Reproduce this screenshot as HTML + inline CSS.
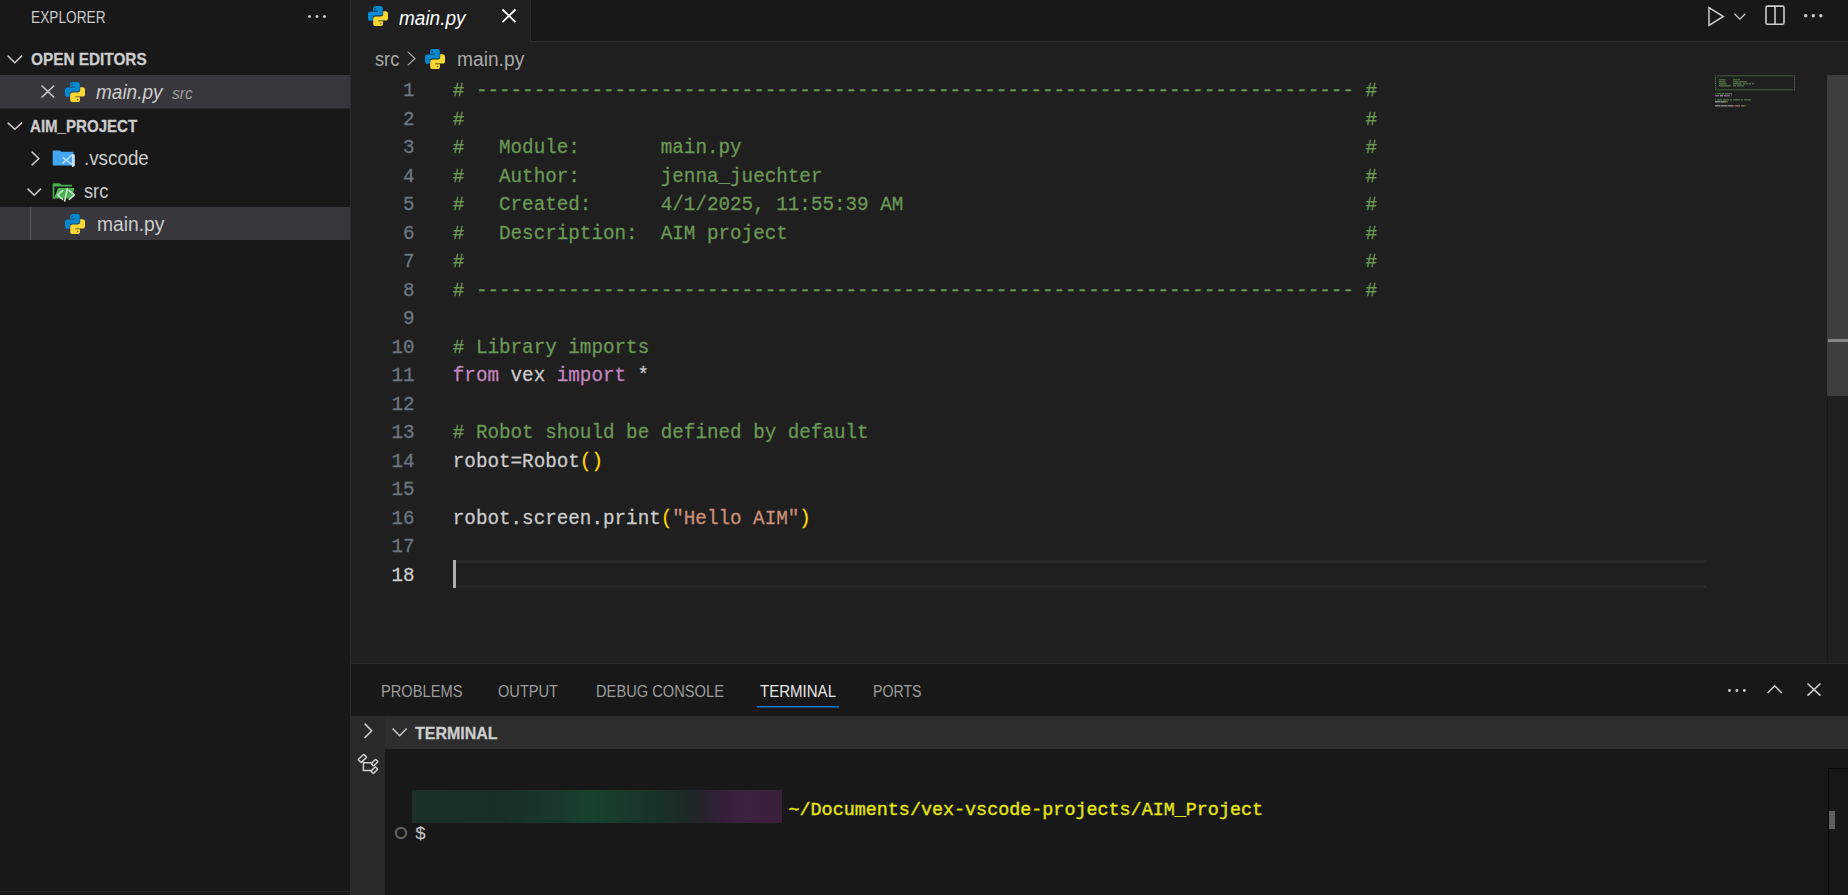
<!DOCTYPE html>
<html><head><meta charset="utf-8">
<style>
*{box-sizing:border-box;margin:0;padding:0}
html,body{width:1848px;height:895px;overflow:hidden;background:#181818}
body{position:relative;font-family:"Liberation Sans",sans-serif;color:#cccccc}
.a{position:absolute}
.t{position:absolute;white-space:pre;line-height:1;transform-origin:0 0}
svg{position:absolute;overflow:visible}
</style></head><body>
<div class="a" style="left:0px;top:0px;width:350px;height:895px;background:#181818;"></div>
<div class="a" style="left:350px;top:0px;width:1px;height:716px;background:#2b2b2b;"></div>
<div class="a" style="left:0px;top:891px;width:350px;height:1px;background:#2b2b2b;"></div>
<div class="a" style="left:351px;top:0px;width:1497px;height:42px;background:#181818;"></div>
<div class="a" style="left:531px;top:41px;width:1317px;height:1px;background:#2b2b2b;"></div>
<div class="a" style="left:351px;top:0px;width:179px;height:42px;background:#1f1f1f;"></div>
<div class="a" style="left:530px;top:0px;width:1px;height:42px;background:#2b2b2b;"></div>
<div class="a" style="left:351px;top:42px;width:1497px;height:621px;background:#1f1f1f;"></div>
<div class="a" style="left:351px;top:663px;width:1497px;height:1px;background:#2b2b2b;"></div>
<div class="a" style="left:351px;top:664px;width:1497px;height:231px;background:#181818;"></div>
<div class="a" style="left:350px;top:716px;width:35px;height:179px;background:#2a2a2a;"></div>
<div class="a" style="left:385px;top:716px;width:1463px;height:33px;background:#2d2d2d;"></div>
<div class="t" style="left:30.50px;top:9.23px;font-family:'Liberation Sans',sans-serif;font-size:16.5px;color:#cccccc;font-weight:normal;font-style:normal;transform:scale(0.83,1.0);">EXPLORER</div>
<svg style="left:308.0px;top:14.5px" width="17.939999999999998" height="3.0" viewBox="0 0 17.939999999999998 3.0"><circle cx="1.5" cy="1.5" r="1.5" fill="#cccccc"/><circle cx="8.969999999999999" cy="1.5" r="1.5" fill="#cccccc"/><circle cx="16.439999999999998" cy="1.5" r="1.5" fill="#cccccc"/></svg>
<svg style="left:7px;top:55.3px" width="15.7" height="8.6" viewBox="0 0 15.7 8.6"><path d="M0.6,0.6 L7.85,7.8 L15.1,0.6" fill="none" stroke="#cccccc" stroke-width="1.5"/></svg>
<div class="t" style="left:30.50px;top:51.03px;font-family:'Liberation Sans',sans-serif;font-size:16.5px;color:#cccccc;font-weight:bold;font-style:normal;transform:scale(0.93,1.0);-webkit-text-stroke:0.3px #cccccc;">OPEN EDITORS</div>
<div class="a" style="left:0px;top:75px;width:350px;height:33px;background:#37373d;"></div>
<div class="a" style="left:0px;top:108px;width:350px;height:1px;background:#262629;"></div>
<svg style="left:41.2px;top:85.4px" width="13.7" height="13" viewBox="0 0 13.7 13"><path d="M0.5,0.5 L13.2,12.5 M13.2,0.5 L0.5,12.5" fill="none" stroke="#cccccc" stroke-width="1.6"/></svg>
<svg style="left:65px;top:82px" width="20" height="20" viewBox="0 0 20 20">
<path fill="#0288d1" d="M5,2.6 Q5,0 7.6,0 H12.4 Q14.8,0 14.8,2.6 V7.2 Q14.8,9.6 12.4,9.6 H7.6 Q4.8,9.6 4.8,12.2 V14.8 H2.5 Q0,14.8 0,12.2 V8 Q0,5.4 2.5,5.4 H9.8 V4.8 H5 Z"/>
<circle cx="7.3" cy="2.5" r="0.85" fill="#000" fill-opacity="0.5"/>
<path fill="#fdd835" d="M15,17.4 Q15,20 12.4,20 H7.6 Q5.2,20 5.2,17.4 V12.8 Q5.2,10.4 7.6,10.4 H12.4 Q15.2,10.4 15.2,7.8 V5.2 H17.5 Q20,5.2 20,7.8 V12 Q20,14.6 17.5,14.6 H10.2 V15.2 H15 Z"/>
<circle cx="12.7" cy="17.5" r="0.85" fill="#000" fill-opacity="0.5"/>
</svg>
<div class="t" style="left:96.20px;top:82.07px;font-family:'Liberation Sans',sans-serif;font-size:20px;color:#cccccc;font-weight:normal;font-style:italic;transform:scale(0.95,1.0);">main.py</div>
<div class="t" style="left:172.20px;top:84.61px;font-family:'Liberation Sans',sans-serif;font-size:17px;color:#9d9d9d;font-weight:normal;font-style:italic;transform:scale(0.92,1.0);">src</div>
<svg style="left:7px;top:121.7px" width="15.7" height="8" viewBox="0 0 15.7 8"><path d="M0.6,0.6 L7.85,7.2 L15.1,0.6" fill="none" stroke="#cccccc" stroke-width="1.5"/></svg>
<div class="t" style="left:30.20px;top:118.03px;font-family:'Liberation Sans',sans-serif;font-size:16.5px;color:#cccccc;font-weight:bold;font-style:normal;transform:scale(0.913,1.0);-webkit-text-stroke:0.3px #cccccc;">AIM_PROJECT</div>
<svg style="left:31.3px;top:150.6px" width="8.6" height="15" viewBox="0 0 8.6 15"><path d="M0.6,0.6 L7.8,7.5 L0.6,14.4" fill="none" stroke="#cccccc" stroke-width="1.5"/></svg>
<svg style="left:52px;top:150px" width="24" height="18" viewBox="0 0 24 18">
<path fill="#42a5f5" d="M0.7,1.4 Q0.7,0.4 1.7,0.4 H8 L9.5,1.7 H20.5 Q21.5,1.7 21.5,2.7 V14.5 Q21.5,15.5 20.5,15.5 H1.7 Q0.7,15.5 0.7,14.5 Z"/>
<path fill="none" stroke="#1f3a52" stroke-opacity="0.5" stroke-width="1" d="M20.2,3.2 L23.2,4.6"/>
<path fill="none" stroke="#c5e1fb" stroke-width="1.4" d="M10.5,7.3 L20.6,14.9 M10.5,13.4 L20.6,4.5"/>
<path fill="#c5e1fb" d="M20,3.6 L22.8,4.8 V16 L20,17.2 Z"/>
</svg>
<div class="t" style="left:84.40px;top:148.07px;font-family:'Liberation Sans',sans-serif;font-size:20px;color:#cccccc;font-weight:normal;font-style:normal;transform:scale(0.94,1.0);">.vscode</div>
<svg style="left:27.4px;top:187.7px" width="14.5" height="8" viewBox="0 0 14.5 8"><path d="M0.6,0.6 L7.25,7.2 L13.9,0.6" fill="none" stroke="#cccccc" stroke-width="1.5"/></svg>
<svg style="left:52px;top:182px" width="24" height="21" viewBox="0 0 24 21">
<path fill="#4caf50" d="M0.7,2.4 Q0.7,1.2 1.9,1.2 H7.6 L9.4,2.8 H19.4 Q20,2.8 20,3.6 V4.4 H2.3 V16.5 H0.7 Z"/>
<path fill="#4caf50" d="M6,6 H21.3 Q22.4,6 22.1,7.1 L19.6,16.5 H0.9 L2.4,15.6 Z"/>
<path fill="none" stroke="#c8e6c9" stroke-width="1.6" stroke-linecap="round" d="M10.6,8.6 L5.6,12.8 L10.6,17.4 M17.3,8.6 L22.3,12.9 L17.3,17.4 M15.3,6.5 L12.7,19"/>
</svg>
<div class="t" style="left:84.40px;top:181.07px;font-family:'Liberation Sans',sans-serif;font-size:20px;color:#cccccc;font-weight:normal;font-style:normal;transform:scale(0.91,1.0);">src</div>
<div class="a" style="left:0px;top:207px;width:350px;height:33px;background:#37373d;"></div>
<div class="a" style="left:30px;top:207px;width:1px;height:33px;background:#585858;"></div>
<svg style="left:65px;top:214px" width="20" height="20" viewBox="0 0 20 20">
<path fill="#0288d1" d="M5,2.6 Q5,0 7.6,0 H12.4 Q14.8,0 14.8,2.6 V7.2 Q14.8,9.6 12.4,9.6 H7.6 Q4.8,9.6 4.8,12.2 V14.8 H2.5 Q0,14.8 0,12.2 V8 Q0,5.4 2.5,5.4 H9.8 V4.8 H5 Z"/>
<circle cx="7.3" cy="2.5" r="0.85" fill="#000" fill-opacity="0.5"/>
<path fill="#fdd835" d="M15,17.4 Q15,20 12.4,20 H7.6 Q5.2,20 5.2,17.4 V12.8 Q5.2,10.4 7.6,10.4 H12.4 Q15.2,10.4 15.2,7.8 V5.2 H17.5 Q20,5.2 20,7.8 V12 Q20,14.6 17.5,14.6 H10.2 V15.2 H15 Z"/>
<circle cx="12.7" cy="17.5" r="0.85" fill="#000" fill-opacity="0.5"/>
</svg>
<div class="t" style="left:96.60px;top:214.07px;font-family:'Liberation Sans',sans-serif;font-size:20px;color:#cccccc;font-weight:normal;font-style:normal;transform:scale(0.963,1.0);">main.py</div>
<svg style="left:368px;top:6px" width="20" height="20" viewBox="0 0 20 20">
<path fill="#0288d1" d="M5,2.6 Q5,0 7.6,0 H12.4 Q14.8,0 14.8,2.6 V7.2 Q14.8,9.6 12.4,9.6 H7.6 Q4.8,9.6 4.8,12.2 V14.8 H2.5 Q0,14.8 0,12.2 V8 Q0,5.4 2.5,5.4 H9.8 V4.8 H5 Z"/>
<circle cx="7.3" cy="2.5" r="0.85" fill="#000" fill-opacity="0.5"/>
<path fill="#fdd835" d="M15,17.4 Q15,20 12.4,20 H7.6 Q5.2,20 5.2,17.4 V12.8 Q5.2,10.4 7.6,10.4 H12.4 Q15.2,10.4 15.2,7.8 V5.2 H17.5 Q20,5.2 20,7.8 V12 Q20,14.6 17.5,14.6 H10.2 V15.2 H15 Z"/>
<circle cx="12.7" cy="17.5" r="0.85" fill="#000" fill-opacity="0.5"/>
</svg>
<div class="t" style="left:399.00px;top:7.57px;font-family:'Liberation Sans',sans-serif;font-size:20px;color:#ffffff;font-weight:normal;font-style:italic;transform:scale(0.95,1.0);">main.py</div>
<svg style="left:502px;top:9.2px" width="14" height="13.6" viewBox="0 0 14 13.6"><path d="M0.5,0.5 L13.5,13.1 M13.5,0.5 L0.5,13.1" fill="none" stroke="#ffffff" stroke-width="1.8"/></svg>
<div class="t" style="left:375.20px;top:49.07px;font-family:'Liberation Sans',sans-serif;font-size:20px;color:#a9a9a9;font-weight:normal;font-style:normal;transform:scale(0.91,1.0);">src</div>
<svg style="left:407.3px;top:51px" width="8.7" height="15" viewBox="0 0 8.7 15"><path d="M0.6,0.6 L7.8999999999999995,7.5 L0.6,14.4" fill="none" stroke="#a9a9a9" stroke-width="1.3"/></svg>
<svg style="left:425px;top:49px" width="20" height="20" viewBox="0 0 20 20">
<path fill="#0288d1" d="M5,2.6 Q5,0 7.6,0 H12.4 Q14.8,0 14.8,2.6 V7.2 Q14.8,9.6 12.4,9.6 H7.6 Q4.8,9.6 4.8,12.2 V14.8 H2.5 Q0,14.8 0,12.2 V8 Q0,5.4 2.5,5.4 H9.8 V4.8 H5 Z"/>
<circle cx="7.3" cy="2.5" r="0.85" fill="#000" fill-opacity="0.5"/>
<path fill="#fdd835" d="M15,17.4 Q15,20 12.4,20 H7.6 Q5.2,20 5.2,17.4 V12.8 Q5.2,10.4 7.6,10.4 H12.4 Q15.2,10.4 15.2,7.8 V5.2 H17.5 Q20,5.2 20,7.8 V12 Q20,14.6 17.5,14.6 H10.2 V15.2 H15 Z"/>
<circle cx="12.7" cy="17.5" r="0.85" fill="#000" fill-opacity="0.5"/>
</svg>
<div class="t" style="left:456.60px;top:49.07px;font-family:'Liberation Sans',sans-serif;font-size:20px;color:#a9a9a9;font-weight:normal;font-style:normal;transform:scale(0.96,1.0);">main.py</div>
<svg style="left:1700px;top:0px" width="148" height="42" viewBox="0 0 148 42"><path d="M9,7.6 V25.4 L23.3,16.5 Z" fill="none" stroke="#cccccc" stroke-width="1.5" stroke-linejoin="miter"/><path d="M34.5,13.8 L39.9,19.2 L45.3,13.8" fill="none" stroke="#cccccc" stroke-width="1.3"/><rect x="66" y="6.1" width="18" height="18.2" rx="1.6" fill="none" stroke="#cccccc" stroke-width="1.6"/><path d="M75,6 V24.5" stroke="#cccccc" stroke-width="1.6"/></svg>
<svg style="left:1804.3px;top:14.3px" width="18.599999999999998" height="3.4" viewBox="0 0 18.599999999999998 3.4"><circle cx="1.7" cy="1.7" r="1.7" fill="#cccccc"/><circle cx="9.299999999999999" cy="1.7" r="1.7" fill="#cccccc"/><circle cx="16.9" cy="1.7" r="1.7" fill="#cccccc"/></svg>
<div class="t" style="left:452.80px;top:82.26px;font-family:'Liberation Mono',monospace;font-size:19.250000000000004px;color:#6a9955;font-weight:normal;font-style:normal;transform:scale(1.0,1.02);-webkit-text-stroke:0.25px #6a9955;"># ---------------------------------------------------------------------------- #</div>
<div class="t" style="left:452.80px;top:110.76px;font-family:'Liberation Mono',monospace;font-size:19.250000000000004px;color:#6a9955;font-weight:normal;font-style:normal;transform:scale(1.0,1.02);-webkit-text-stroke:0.25px #6a9955;">#                                                                              #</div>
<div class="t" style="left:452.80px;top:139.26px;font-family:'Liberation Mono',monospace;font-size:19.250000000000004px;color:#6a9955;font-weight:normal;font-style:normal;transform:scale(1.0,1.02);-webkit-text-stroke:0.25px #6a9955;">#   Module:       main.py                                                      #</div>
<div class="t" style="left:452.80px;top:167.76px;font-family:'Liberation Mono',monospace;font-size:19.250000000000004px;color:#6a9955;font-weight:normal;font-style:normal;transform:scale(1.0,1.02);-webkit-text-stroke:0.25px #6a9955;">#   Author:       jenna_juechter                                               #</div>
<div class="t" style="left:452.80px;top:196.26px;font-family:'Liberation Mono',monospace;font-size:19.250000000000004px;color:#6a9955;font-weight:normal;font-style:normal;transform:scale(1.0,1.02);-webkit-text-stroke:0.25px #6a9955;">#   Created:      4/1/2025, 11:55:39 AM                                        #</div>
<div class="t" style="left:452.80px;top:224.76px;font-family:'Liberation Mono',monospace;font-size:19.250000000000004px;color:#6a9955;font-weight:normal;font-style:normal;transform:scale(1.0,1.02);-webkit-text-stroke:0.25px #6a9955;">#   Description:  AIM project                                                  #</div>
<div class="t" style="left:452.80px;top:253.26px;font-family:'Liberation Mono',monospace;font-size:19.250000000000004px;color:#6a9955;font-weight:normal;font-style:normal;transform:scale(1.0,1.02);-webkit-text-stroke:0.25px #6a9955;">#                                                                              #</div>
<div class="t" style="left:452.80px;top:281.76px;font-family:'Liberation Mono',monospace;font-size:19.250000000000004px;color:#6a9955;font-weight:normal;font-style:normal;transform:scale(1.0,1.02);-webkit-text-stroke:0.25px #6a9955;"># ---------------------------------------------------------------------------- #</div>
<div class="t" style="left:452.80px;top:338.76px;font-family:'Liberation Mono',monospace;font-size:19.250000000000004px;color:#6a9955;font-weight:normal;font-style:normal;transform:scale(1.0,1.02);-webkit-text-stroke:0.25px #6a9955;"># Library imports</div>
<div class="t" style="left:452.80px;top:367.26px;font-family:'Liberation Mono',monospace;font-size:19.250000000000004px;color:#c586c0;font-weight:normal;font-style:normal;transform:scale(1.0,1.02);-webkit-text-stroke:0.25px #c586c0;">from</div>
<div class="t" style="left:510.55px;top:367.26px;font-family:'Liberation Mono',monospace;font-size:19.250000000000004px;color:#cccccc;font-weight:normal;font-style:normal;transform:scale(1.0,1.02);-webkit-text-stroke:0.25px #cccccc;">vex</div>
<div class="t" style="left:556.75px;top:367.26px;font-family:'Liberation Mono',monospace;font-size:19.250000000000004px;color:#c586c0;font-weight:normal;font-style:normal;transform:scale(1.0,1.02);-webkit-text-stroke:0.25px #c586c0;">import</div>
<div class="t" style="left:637.60px;top:367.26px;font-family:'Liberation Mono',monospace;font-size:19.250000000000004px;color:#cccccc;font-weight:normal;font-style:normal;transform:scale(1.0,1.02);-webkit-text-stroke:0.25px #cccccc;">*</div>
<div class="t" style="left:452.80px;top:424.26px;font-family:'Liberation Mono',monospace;font-size:19.250000000000004px;color:#6a9955;font-weight:normal;font-style:normal;transform:scale(1.0,1.02);-webkit-text-stroke:0.25px #6a9955;"># Robot should be defined by default</div>
<div class="t" style="left:452.80px;top:452.76px;font-family:'Liberation Mono',monospace;font-size:19.250000000000004px;color:#cccccc;font-weight:normal;font-style:normal;transform:scale(1.0,1.02);-webkit-text-stroke:0.25px #cccccc;">robot=Robot</div>
<div class="t" style="left:579.85px;top:452.76px;font-family:'Liberation Mono',monospace;font-size:19.250000000000004px;color:#ffd700;font-weight:normal;font-style:normal;transform:scale(1.0,1.02);-webkit-text-stroke:0.25px #ffd700;">()</div>
<div class="t" style="left:452.80px;top:509.76px;font-family:'Liberation Mono',monospace;font-size:19.250000000000004px;color:#cccccc;font-weight:normal;font-style:normal;transform:scale(1.0,1.02);-webkit-text-stroke:0.25px #cccccc;">robot.screen.print</div>
<div class="t" style="left:660.70px;top:509.76px;font-family:'Liberation Mono',monospace;font-size:19.250000000000004px;color:#ffd700;font-weight:normal;font-style:normal;transform:scale(1.0,1.02);-webkit-text-stroke:0.25px #ffd700;">(</div>
<div class="t" style="left:672.25px;top:509.76px;font-family:'Liberation Mono',monospace;font-size:19.250000000000004px;color:#ce9178;font-weight:normal;font-style:normal;transform:scale(1.0,1.02);-webkit-text-stroke:0.25px #ce9178;">&quot;Hello AIM&quot;</div>
<div class="t" style="left:799.30px;top:509.76px;font-family:'Liberation Mono',monospace;font-size:19.250000000000004px;color:#ffd700;font-weight:normal;font-style:normal;transform:scale(1.0,1.02);-webkit-text-stroke:0.25px #ffd700;">)</div>
<div class="t" style="left:403.05px;top:82.26px;font-family:'Liberation Mono',monospace;font-size:19.250000000000004px;color:#6e7681;font-weight:normal;font-style:normal;transform:scale(1.0,1.02);-webkit-text-stroke:0.25px #6e7681;">1</div>
<div class="t" style="left:403.05px;top:110.76px;font-family:'Liberation Mono',monospace;font-size:19.250000000000004px;color:#6e7681;font-weight:normal;font-style:normal;transform:scale(1.0,1.02);-webkit-text-stroke:0.25px #6e7681;">2</div>
<div class="t" style="left:403.05px;top:139.26px;font-family:'Liberation Mono',monospace;font-size:19.250000000000004px;color:#6e7681;font-weight:normal;font-style:normal;transform:scale(1.0,1.02);-webkit-text-stroke:0.25px #6e7681;">3</div>
<div class="t" style="left:403.05px;top:167.76px;font-family:'Liberation Mono',monospace;font-size:19.250000000000004px;color:#6e7681;font-weight:normal;font-style:normal;transform:scale(1.0,1.02);-webkit-text-stroke:0.25px #6e7681;">4</div>
<div class="t" style="left:403.05px;top:196.26px;font-family:'Liberation Mono',monospace;font-size:19.250000000000004px;color:#6e7681;font-weight:normal;font-style:normal;transform:scale(1.0,1.02);-webkit-text-stroke:0.25px #6e7681;">5</div>
<div class="t" style="left:403.05px;top:224.76px;font-family:'Liberation Mono',monospace;font-size:19.250000000000004px;color:#6e7681;font-weight:normal;font-style:normal;transform:scale(1.0,1.02);-webkit-text-stroke:0.25px #6e7681;">6</div>
<div class="t" style="left:403.05px;top:253.26px;font-family:'Liberation Mono',monospace;font-size:19.250000000000004px;color:#6e7681;font-weight:normal;font-style:normal;transform:scale(1.0,1.02);-webkit-text-stroke:0.25px #6e7681;">7</div>
<div class="t" style="left:403.05px;top:281.76px;font-family:'Liberation Mono',monospace;font-size:19.250000000000004px;color:#6e7681;font-weight:normal;font-style:normal;transform:scale(1.0,1.02);-webkit-text-stroke:0.25px #6e7681;">8</div>
<div class="t" style="left:403.05px;top:310.26px;font-family:'Liberation Mono',monospace;font-size:19.250000000000004px;color:#6e7681;font-weight:normal;font-style:normal;transform:scale(1.0,1.02);-webkit-text-stroke:0.25px #6e7681;">9</div>
<div class="t" style="left:391.50px;top:338.76px;font-family:'Liberation Mono',monospace;font-size:19.250000000000004px;color:#6e7681;font-weight:normal;font-style:normal;transform:scale(1.0,1.02);-webkit-text-stroke:0.25px #6e7681;">10</div>
<div class="t" style="left:391.50px;top:367.26px;font-family:'Liberation Mono',monospace;font-size:19.250000000000004px;color:#6e7681;font-weight:normal;font-style:normal;transform:scale(1.0,1.02);-webkit-text-stroke:0.25px #6e7681;">11</div>
<div class="t" style="left:391.50px;top:395.76px;font-family:'Liberation Mono',monospace;font-size:19.250000000000004px;color:#6e7681;font-weight:normal;font-style:normal;transform:scale(1.0,1.02);-webkit-text-stroke:0.25px #6e7681;">12</div>
<div class="t" style="left:391.50px;top:424.26px;font-family:'Liberation Mono',monospace;font-size:19.250000000000004px;color:#6e7681;font-weight:normal;font-style:normal;transform:scale(1.0,1.02);-webkit-text-stroke:0.25px #6e7681;">13</div>
<div class="t" style="left:391.50px;top:452.76px;font-family:'Liberation Mono',monospace;font-size:19.250000000000004px;color:#6e7681;font-weight:normal;font-style:normal;transform:scale(1.0,1.02);-webkit-text-stroke:0.25px #6e7681;">14</div>
<div class="t" style="left:391.50px;top:481.26px;font-family:'Liberation Mono',monospace;font-size:19.250000000000004px;color:#6e7681;font-weight:normal;font-style:normal;transform:scale(1.0,1.02);-webkit-text-stroke:0.25px #6e7681;">15</div>
<div class="t" style="left:391.50px;top:509.76px;font-family:'Liberation Mono',monospace;font-size:19.250000000000004px;color:#6e7681;font-weight:normal;font-style:normal;transform:scale(1.0,1.02);-webkit-text-stroke:0.25px #6e7681;">16</div>
<div class="t" style="left:391.50px;top:538.26px;font-family:'Liberation Mono',monospace;font-size:19.250000000000004px;color:#6e7681;font-weight:normal;font-style:normal;transform:scale(1.0,1.02);-webkit-text-stroke:0.25px #6e7681;">17</div>
<div class="t" style="left:391.50px;top:566.76px;font-family:'Liberation Mono',monospace;font-size:19.250000000000004px;color:#cccccc;font-weight:normal;font-style:normal;transform:scale(1.0,1.02);-webkit-text-stroke:0.25px #cccccc;">18</div>
<div class="a" style="left:456px;top:560px;width:1250px;height:3px;background:#282828;"></div>
<div class="a" style="left:456px;top:585px;width:1250px;height:3px;background:#282828;"></div>
<div class="a" style="left:453px;top:560px;width:3px;height:28px;background:#aeafad;"></div>
<svg style="left:1715px;top:0px;opacity:0.75" width="100" height="120" viewBox="0 0 100 120"><rect x="0" y="75" width="1" height="1.5" fill="#6a9955" fill-opacity="0.8"/><rect x="2" y="75" width="76" height="1.5" fill="#6a9955" fill-opacity="0.45"/><rect x="79" y="75" width="1" height="1.5" fill="#6a9955" fill-opacity="0.8"/><rect x="0" y="77" width="1" height="1.5" fill="#6a9955" fill-opacity="0.8"/><rect x="79" y="77" width="1" height="1.5" fill="#6a9955" fill-opacity="0.8"/><rect x="0" y="79" width="1" height="1.5" fill="#6a9955" fill-opacity="0.8"/><rect x="4" y="79" width="6" height="1.5" fill="#6a9955" fill-opacity="0.8"/><rect x="10" y="79" width="1" height="1.5" fill="#6a9955" fill-opacity="0.45"/><rect x="18" y="79" width="4" height="1.5" fill="#6a9955" fill-opacity="0.8"/><rect x="22" y="79" width="1" height="1.5" fill="#6a9955" fill-opacity="0.45"/><rect x="23" y="79" width="2" height="1.5" fill="#6a9955" fill-opacity="0.8"/><rect x="79" y="79" width="1" height="1.5" fill="#6a9955" fill-opacity="0.8"/><rect x="0" y="81" width="1" height="1.5" fill="#6a9955" fill-opacity="0.8"/><rect x="4" y="81" width="6" height="1.5" fill="#6a9955" fill-opacity="0.8"/><rect x="10" y="81" width="1" height="1.5" fill="#6a9955" fill-opacity="0.45"/><rect x="18" y="81" width="5" height="1.5" fill="#6a9955" fill-opacity="0.8"/><rect x="23" y="81" width="1" height="1.5" fill="#6a9955" fill-opacity="0.45"/><rect x="24" y="81" width="8" height="1.5" fill="#6a9955" fill-opacity="0.8"/><rect x="79" y="81" width="1" height="1.5" fill="#6a9955" fill-opacity="0.8"/><rect x="0" y="83" width="1" height="1.5" fill="#6a9955" fill-opacity="0.8"/><rect x="4" y="83" width="7" height="1.5" fill="#6a9955" fill-opacity="0.8"/><rect x="11" y="83" width="1" height="1.5" fill="#6a9955" fill-opacity="0.45"/><rect x="18" y="83" width="8" height="1.5" fill="#6a9955" fill-opacity="0.8"/><rect x="26" y="83" width="1" height="1.5" fill="#6a9955" fill-opacity="0.45"/><rect x="28" y="83" width="2" height="1.5" fill="#6a9955" fill-opacity="0.8"/><rect x="30" y="83" width="1" height="1.5" fill="#6a9955" fill-opacity="0.45"/><rect x="31" y="83" width="2" height="1.5" fill="#6a9955" fill-opacity="0.8"/><rect x="33" y="83" width="1" height="1.5" fill="#6a9955" fill-opacity="0.45"/><rect x="34" y="83" width="2" height="1.5" fill="#6a9955" fill-opacity="0.8"/><rect x="37" y="83" width="2" height="1.5" fill="#6a9955" fill-opacity="0.8"/><rect x="79" y="83" width="1" height="1.5" fill="#6a9955" fill-opacity="0.8"/><rect x="0" y="85" width="1" height="1.5" fill="#6a9955" fill-opacity="0.8"/><rect x="4" y="85" width="11" height="1.5" fill="#6a9955" fill-opacity="0.8"/><rect x="15" y="85" width="1" height="1.5" fill="#6a9955" fill-opacity="0.45"/><rect x="18" y="85" width="3" height="1.5" fill="#6a9955" fill-opacity="0.8"/><rect x="22" y="85" width="7" height="1.5" fill="#6a9955" fill-opacity="0.8"/><rect x="79" y="85" width="1" height="1.5" fill="#6a9955" fill-opacity="0.8"/><rect x="0" y="87" width="1" height="1.5" fill="#6a9955" fill-opacity="0.8"/><rect x="79" y="87" width="1" height="1.5" fill="#6a9955" fill-opacity="0.8"/><rect x="0" y="89" width="1" height="1.5" fill="#6a9955" fill-opacity="0.8"/><rect x="2" y="89" width="76" height="1.5" fill="#6a9955" fill-opacity="0.45"/><rect x="79" y="89" width="1" height="1.5" fill="#6a9955" fill-opacity="0.8"/><rect x="0" y="93" width="1" height="1.5" fill="#6a9955" fill-opacity="0.8"/><rect x="2" y="93" width="7" height="1.5" fill="#6a9955" fill-opacity="0.8"/><rect x="10" y="93" width="7" height="1.5" fill="#6a9955" fill-opacity="0.8"/><rect x="0" y="95" width="4" height="1.5" fill="#c586c0" fill-opacity="0.8"/><rect x="5" y="95" width="3" height="1.5" fill="#cccccc" fill-opacity="0.8"/><rect x="9" y="95" width="6" height="1.5" fill="#c586c0" fill-opacity="0.8"/><rect x="16" y="95" width="1" height="1.5" fill="#cccccc" fill-opacity="0.45"/><rect x="0" y="99" width="1" height="1.5" fill="#6a9955" fill-opacity="0.8"/><rect x="2" y="99" width="5" height="1.5" fill="#6a9955" fill-opacity="0.8"/><rect x="8" y="99" width="6" height="1.5" fill="#6a9955" fill-opacity="0.8"/><rect x="15" y="99" width="2" height="1.5" fill="#6a9955" fill-opacity="0.8"/><rect x="18" y="99" width="7" height="1.5" fill="#6a9955" fill-opacity="0.8"/><rect x="26" y="99" width="2" height="1.5" fill="#6a9955" fill-opacity="0.8"/><rect x="29" y="99" width="7" height="1.5" fill="#6a9955" fill-opacity="0.8"/><rect x="0" y="101" width="5" height="1.5" fill="#cccccc" fill-opacity="0.8"/><rect x="5" y="101" width="1" height="1.5" fill="#cccccc" fill-opacity="0.45"/><rect x="6" y="101" width="5" height="1.5" fill="#cccccc" fill-opacity="0.8"/><rect x="11" y="101" width="2" height="1.5" fill="#ffd700" fill-opacity="0.45"/><rect x="0" y="105" width="5" height="1.5" fill="#cccccc" fill-opacity="0.8"/><rect x="5" y="105" width="1" height="1.5" fill="#cccccc" fill-opacity="0.45"/><rect x="6" y="105" width="6" height="1.5" fill="#cccccc" fill-opacity="0.8"/><rect x="12" y="105" width="1" height="1.5" fill="#cccccc" fill-opacity="0.45"/><rect x="13" y="105" width="5" height="1.5" fill="#cccccc" fill-opacity="0.8"/><rect x="18" y="105" width="1" height="1.5" fill="#ffd700" fill-opacity="0.45"/><rect x="19" y="105" width="1" height="1.5" fill="#ce9178" fill-opacity="0.45"/><rect x="20" y="105" width="5" height="1.5" fill="#ce9178" fill-opacity="0.8"/><rect x="26" y="105" width="3" height="1.5" fill="#ce9178" fill-opacity="0.8"/><rect x="29" y="105" width="1" height="1.5" fill="#ce9178" fill-opacity="0.45"/><rect x="30" y="105" width="1" height="1.5" fill="#ffd700" fill-opacity="0.45"/></svg>
<div class="a" style="left:1827px;top:396px;width:1px;height:267px;background:#171717;"></div>
<div class="a" style="left:1827px;top:75px;width:21px;height:321px;background:#3f3f3f;"></div>
<div class="a" style="left:1828px;top:339px;width:20px;height:3px;background:#858585;"></div>
<div class="t" style="left:380.60px;top:683.23px;font-family:'Liberation Sans',sans-serif;font-size:16.5px;color:#9d9d9d;font-weight:normal;font-style:normal;transform:scale(0.888,1.0);">PROBLEMS</div>
<div class="t" style="left:497.50px;top:683.23px;font-family:'Liberation Sans',sans-serif;font-size:16.5px;color:#9d9d9d;font-weight:normal;font-style:normal;transform:scale(0.885,1.0);">OUTPUT</div>
<div class="t" style="left:595.50px;top:683.23px;font-family:'Liberation Sans',sans-serif;font-size:16.5px;color:#9d9d9d;font-weight:normal;font-style:normal;transform:scale(0.889,1.0);">DEBUG CONSOLE</div>
<div class="t" style="left:759.80px;top:683.23px;font-family:'Liberation Sans',sans-serif;font-size:16.5px;color:#e7e7e7;font-weight:normal;font-style:normal;transform:scale(0.911,1.0);">TERMINAL</div>
<div class="t" style="left:872.50px;top:683.23px;font-family:'Liberation Sans',sans-serif;font-size:16.5px;color:#9d9d9d;font-weight:normal;font-style:normal;transform:scale(0.857,1.0);">PORTS</div>
<div class="a" style="left:757px;top:706px;width:82px;height:1px;background:#0078d4;"></div>
<div class="a" style="left:757px;top:707px;width:82px;height:1px;background:rgba(0,120,212,0.45);"></div>
<svg style="left:1728.05px;top:688.55px" width="17.8" height="2.9" viewBox="0 0 17.8 2.9"><circle cx="1.45" cy="1.45" r="1.45" fill="#cccccc"/><circle cx="8.9" cy="1.45" r="1.45" fill="#cccccc"/><circle cx="16.35" cy="1.45" r="1.45" fill="#cccccc"/></svg>
<svg style="left:1767px;top:684.6px" width="15.4" height="8.6" viewBox="0 0 15.4 8.6"><path d="M0.6,8.0 L7.7,0.8 L14.8,8.0" fill="none" stroke="#cccccc" stroke-width="1.5"/></svg>
<svg style="left:1806.6px;top:683.2px" width="14" height="13.2" viewBox="0 0 14 13.2"><path d="M0.5,0.5 L13.5,12.7 M13.5,0.5 L0.5,12.7" fill="none" stroke="#cccccc" stroke-width="1.7"/></svg>
<svg style="left:364px;top:723.3px" width="8.5" height="15.5" viewBox="0 0 8.5 15.5"><path d="M0.6,0.6 L7.7,7.75 L0.6,14.9" fill="none" stroke="#cccccc" stroke-width="1.5"/></svg>
<svg style="left:392.3px;top:727.8px" width="15.3" height="8.6" viewBox="0 0 15.3 8.6"><path d="M0.6,0.6 L7.65,7.8 L14.700000000000001,0.6" fill="none" stroke="#cccccc" stroke-width="1.5"/></svg>
<div class="t" style="left:415.30px;top:724.51px;font-family:'Liberation Sans',sans-serif;font-size:17px;color:#cccccc;font-weight:bold;font-style:normal;transform:scale(0.94,1.0);-webkit-text-stroke:0.3px #cccccc;">TERMINAL</div>
<svg style="left:355px;top:752px" width="24" height="24" viewBox="0 0 24 24">
<g fill="none" stroke="#d0d0d0" stroke-width="1.5">
<rect x="3.5" y="4.3" width="7.8" height="4.2" rx="0.7" transform="rotate(-43 7.4 6.4)"/>
<path d="M8.4,9.4 V18.5 H16.5 M8.4,10.7 H16.5"/>
<rect x="16.5" y="9" width="6.2" height="3.4" rx="0.7" transform="rotate(-43 19.6 10.7)"/>
<rect x="16.2" y="16.5" width="6.2" height="3.4" rx="0.7" transform="rotate(-43 19.3 18.2)"/>
</g></svg>
<div class="a" style="left:412px;top:790px;width:370px;height:33px;background:linear-gradient(90deg,#1b3127 0%,#1a2e25 22%,#18382a 40%,#17432d 48%,#193a2a 57%,#1a3126 68%,#1a2a24 74%,#28232d 79%,#37203a 85%,#3d2140 90%,#3a1f39 100%);"></div>
<div class="t" style="left:788.50px;top:801.50px;font-family:'Liberation Mono',monospace;font-size:18.4px;color:#e5e510;font-weight:normal;font-style:normal;-webkit-text-stroke:0.35px #e5e510;">~/Documents/vex-vscode-projects/AIM_Project</div>
<svg style="left:394px;top:826px" width="14" height="14" viewBox="0 0 14 14"><circle cx="7" cy="7" r="5.1" fill="none" stroke="#5f5f5f" stroke-width="2.3"/></svg>
<div class="t" style="left:415.00px;top:825.95px;font-family:'Liberation Mono',monospace;font-size:18.333333333333336px;color:#cccccc;font-weight:normal;font-style:normal;">$</div>
<div class="a" style="left:1828px;top:768px;width:1px;height:127px;background:#050505;"></div>
<div class="a" style="left:1828px;top:768px;width:20px;height:1px;background:#050505;"></div>
<div class="a" style="left:1829px;top:811px;width:6px;height:18px;background:#5f5f5f;"></div>
</body></html>
